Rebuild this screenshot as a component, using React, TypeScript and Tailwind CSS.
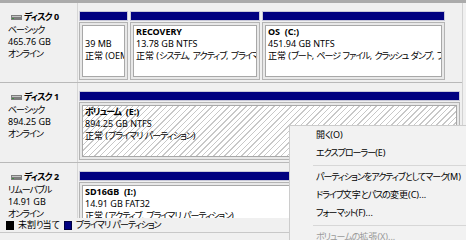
import React from "react";

type Part = {
  name?: string;
  size: string;
  status: string;
  width: string;
  hatched?: boolean;
};

type Disk = {
  title: string;
  kind: string;
  size: string;
  state: string;
  parts: Part[];
};

const disks: Disk[] = [
  {
    title: "ディスク 0",
    kind: "ベーシック",
    size: "465.76 GB",
    state: "オンライン",
    parts: [
      { size: "39 MB", status: "正常 (OEM パーティション)", width: "w-[49px]" },
      {
        name: "RECOVERY",
        size: "13.78 GB NTFS",
        status: "正常 (システム, アクティブ, プライマリ パーティション)",
        width: "w-[130px]",
      },
      {
        name: "OS  (C:)",
        size: "451.94 GB NTFS",
        status: "正常 (ブート, ページ ファイル, クラッシュ ダンプ, プライマリ パーティション)",
        width: "w-[183px]",
      },
    ],
  },
  {
    title: "ディスク 1",
    kind: "ベーシック",
    size: "894.25 GB",
    state: "オンライン",
    parts: [
      {
        name: "ボリューム  (E:)",
        size: "894.25 GB NTFS",
        status: "正常 (プライマリ パーティション)",
        width: "w-[381px]",
        hatched: true,
      },
    ],
  },
  {
    title: "ディスク 2",
    kind: "リムーバブル",
    size: "14.91 GB",
    state: "オンライン",
    parts: [
      {
        name: "SD16GB  (I:)",
        size: "14.91 GB FAT32",
        status: "正常 (アクティブ, プライマリ パーティション)",
        width: "w-[381px]",
      },
    ],
  },
];

// kana runs are set a little tighter, like the UI font in the screenshot
function JP({ text }: { text: string }) {
  const runs = text.split(/([\u3040-\u30ff]+)/);
  return (
    <>
      {runs.map((r, i) =>
        /[\u3040-\u30ff]/.test(r) ? (
          <span key={i} className="tracking-[-1px]">
            {r}
          </span>
        ) : (
          r
        )
      )}
    </>
  );
}

function DiskIcon() {
  return (
    <svg width="11" height="5" viewBox="0 0 11 5" className="shrink-0">
      <rect x="0" y="0" width="11" height="5" fill="#7d7d7d" />
      <rect x="1" y="1" width="9" height="1" fill="#c4c4c4" />
      <rect x="1" y="3" width="2" height="1" fill="#3f8f3f" />
    </svg>
  );
}

function Partition({ part }: { part: Part }) {
  return (
    <div className={`${part.width} shrink-0 flex flex-col`}>
      <div className="h-[10px] bg-[#000080] border border-[#c8c8d8]" />
      <div className="mt-[1px] h-[58px] border border-[#b4b4b4] bg-[#e8e8e8] p-[2px]">
        <div
          className={`h-full border border-[#a8a8a8] pl-[2px] overflow-hidden whitespace-pre ${
            part.hatched
              ? "bg-[repeating-linear-gradient(135deg,#ffffff_0px,#ffffff_3px,#c8c8c8_3px,#c8c8c8_4px)]"
              : "bg-white"
          }`}
        >
          <div className="h-[12px] font-bold">
            <JP text={part.name ?? ""} />
          </div>
          <div className="h-[12px]">{part.size}</div>
          <div className="h-[12px]">
            <JP text={part.status} />
          </div>
        </div>
      </div>
    </div>
  );
}

function DiskRow({ disk }: { disk: Disk }) {
  return (
    <div className="h-[80px] shrink-0 flex border-b border-[#b9b9b9]">
      <div className="w-[78px] shrink-0 border-r border-[#d6d6d6] pt-[8px]">
        <div className="h-[13px] flex items-center gap-[2px] pl-[11px] pb-[1px] font-bold">
          <DiskIcon />
          <span>
            <JP text={disk.title} />
          </span>
        </div>
        <div className="pl-[8px] h-[12px]">
          <JP text={disk.kind} />
        </div>
        <div className="pl-[8px] h-[12px]">{disk.size}</div>
        <div className="pl-[8px] h-[12px]">
          <JP text={disk.state} />
        </div>
      </div>
      <div className="flex-1 flex gap-[2px] pl-[1px] pt-[8px]">
        {disk.parts.map((p, i) => (
          <Partition key={i} part={p} />
        ))}
      </div>
    </div>
  );
}

function MenuItem({ label, disabled }: { label: string; disabled?: boolean }) {
  return (
    <div
      className={`h-[18px] flex items-center pl-[26px] whitespace-nowrap ${
        disabled ? "text-[#9a9a9a]" : "text-black"
      }`}
    >
      <span>
        <JP text={label} />
      </span>
    </div>
  );
}

function Separator() {
  return (
    <div className="h-[6px] flex items-center ml-[23px]">
      <div className="h-[1px] w-full bg-[#d7d7d7]" />
    </div>
  );
}

export default function App() {
  return (
    <div className="relative w-[466px] h-[240px] overflow-hidden bg-[#f0f0f0] text-black text-[9px] leading-[12px] font-['Noto_Sans','Noto_Sans_CJK_JP',sans-serif] [font-feature-settings:'palt']">
      <div className="h-[3px] bg-[#ababab]" />
      <div className="h-[215px] flex overflow-hidden">
        <div className="flex-1 flex flex-col">
          {disks.map((d) => (
            <DiskRow key={d.title} disk={d} />
          ))}
        </div>
        <div className="w-[4px] shrink-0 border-l border-[#d2d2d2] bg-[#f0f0f0]" />
      </div>
      <div className="h-[14px] flex items-center bg-[#f0f0f0]">
        <div className="ml-[6px] w-[8px] h-[9px] bg-black" />
        <span className="ml-[4px]">
          <JP text="未割り当て" />
        </span>
        <div className="ml-[5px] w-[8px] h-[9px] bg-[#000080] border border-[#000040]" />
        <span className="ml-[4px]">
          <JP text="プライマリ パーティション" />
        </span>
      </div>
      <div className="h-[8px] border-t border-[#c8c8c8] bg-[#f0f0f0]" />

      <div className="absolute left-[289px] top-[125px] w-[200px] bg-[#f2f2f2] border border-[#cccccc]">
        <MenuItem label="開く(O)" />
        <MenuItem label="エクスプローラー(E)" />
        <Separator />
        <MenuItem label="パーティションをアクティブとしてマーク(M)" />
        <MenuItem label="ドライブ文字とパスの変更(C)..." />
        <MenuItem label="フォーマット(F)..." />
        <Separator />
        <MenuItem label="ボリュームの拡張(X)..." disabled />
      </div>
    </div>
  );
}
